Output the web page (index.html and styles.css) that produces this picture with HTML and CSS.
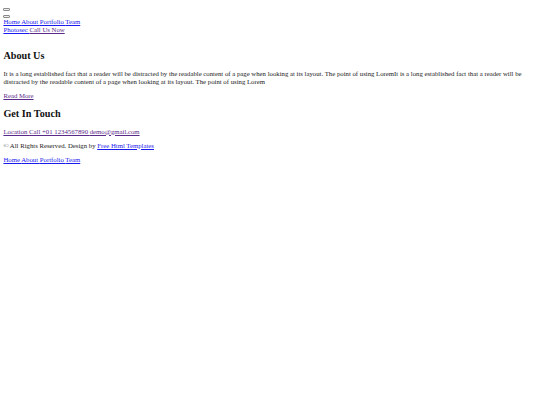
FILE: index.html
```html
<!DOCTYPE html>
<html lang="en">
<head>
<meta charset="utf-8">
<title>Photosec</title>
<link rel="stylesheet" href="styles.css">
</head>
<body>
<header class="header">
  <div class="toggle-row"><button class="toggler" type="button"></button></div>
  <div class="toggle-row"><button class="toggler" type="button"></button></div>
  <nav class="nav"><a class="link" href="#">Home </a><a class="link" href="#">About </a><a class="link" href="#">Portfolio </a><a class="link" href="#">Team</a></nav>
  <div class="brand-row"><a class="link" href="#">Photosec </a><a class="link visited" href="#">Call Us Now</a></div>
</header>
<section class="about">
  <h2 class="heading">About Us</h2>
  <p class="text">It is a long established fact that a reader will be distracted by the readable content of a page when looking at its layout. The point of using LoremIt is a long established fact that a reader will be distracted by the readable content of a page when looking at its layout. The point of using Lorem</p>
  <a class="link visited" href="#">Read More</a>
</section>
<section class="contact">
  <h2 class="heading">Get In Touch</h2>
  <div class="contact-row"><a class="link visited" href="#">Location </a><a class="link visited" href="#">Call +01 1234567890 </a><a class="link visited" href="#">demo@gmail.com</a></div>
</section>
<footer class="footer">
  <p class="text">© All Rights Reserved. Design by <a class="link" href="#">Free Html Templates</a></p>
  <p class="text"><a class="link" href="#">Home </a><a class="link" href="#">About </a><a class="link" href="#">Portfolio </a><a class="link" href="#">Team</a></p>
</footer>
</body>
</html>
```

FILE: styles.css
```css
html {
  background: #fff;
}
body {
  margin: 3.4px;
  font-family: "Liberation Serif", "Times New Roman", serif;
  font-size: 6.75px;
  line-height: 8px;
  color: #1a1a1a;
}
.header {
  padding-bottom: 7.6px;
}
.toggle-row {
  line-height: 7px;
}
.toggler {
  font-size: 5.6px;
  padding: 0.4px 2.5px;
  border: 0.8px solid #8a8a8a;
  border-radius: 1px;
  background: #f0f0f0;
  vertical-align: baseline;
}
.link {
  color: #1a1aee;
  text-decoration: underline;
}
.link.visited {
  color: #5a2a8b;
}
.heading {
  font-size: 10.2px;
  line-height: 12px;
  font-weight: bold;
  color: #111;
  margin: 8px 0;
}
.text {
  margin: 6px 0;
}
```
